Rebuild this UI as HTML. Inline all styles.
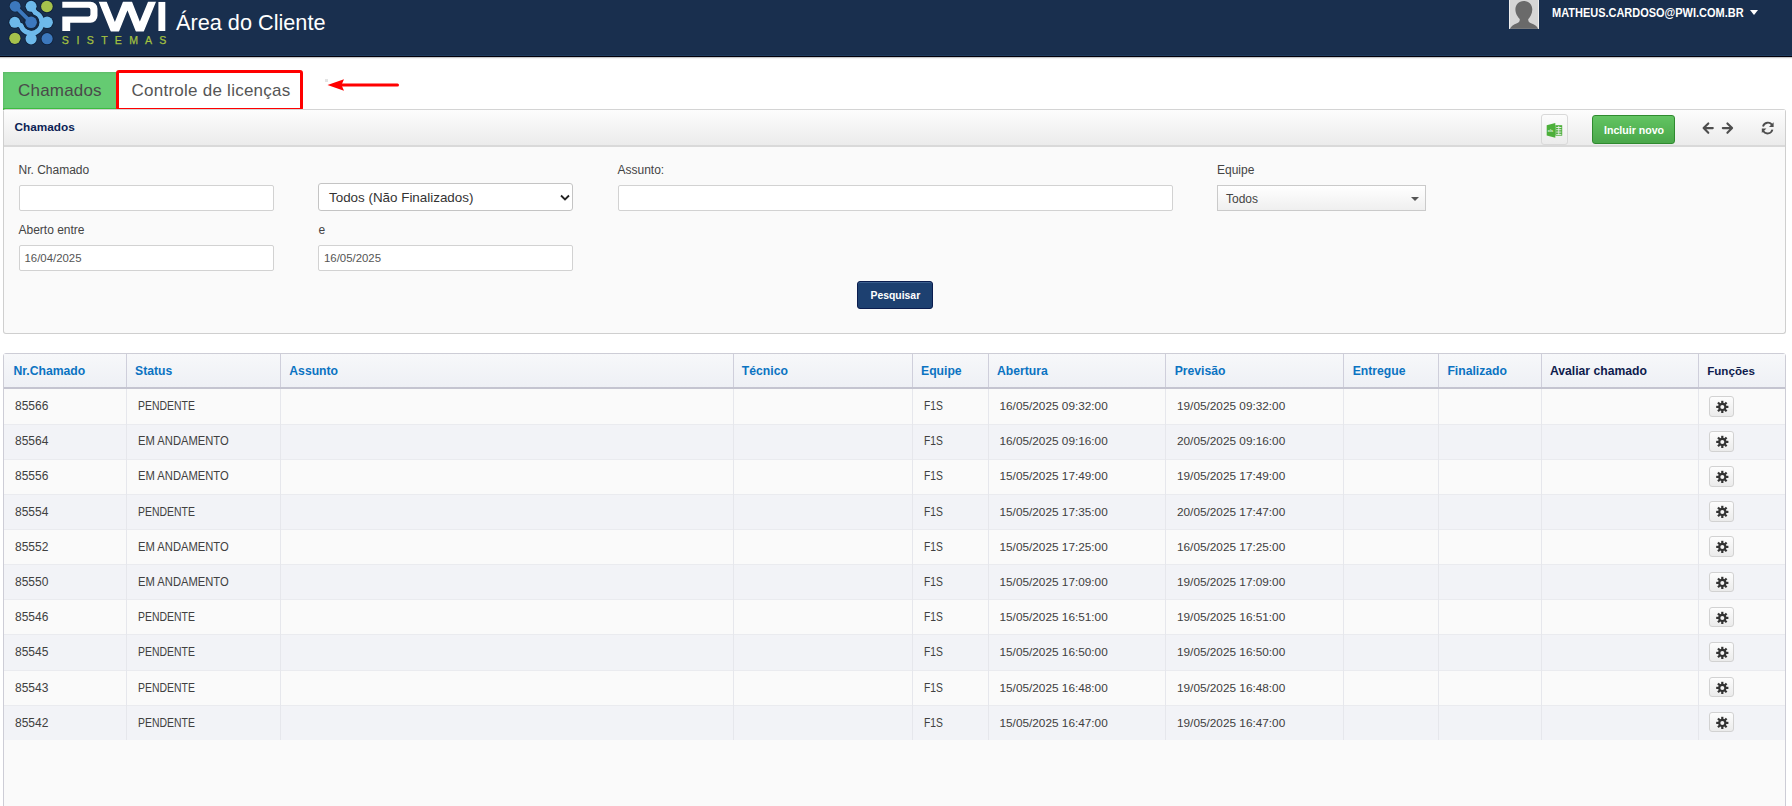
<!DOCTYPE html>
<html><head><meta charset="utf-8">
<style>
*{box-sizing:border-box;margin:0;padding:0}
html,body{width:1792px;height:806px;overflow:hidden;background:#fff;font-family:"Liberation Sans",sans-serif;position:relative}
.abs{position:absolute}
#hdr{left:0;top:0;width:1792px;height:55px;background:#192f4e}
#hl1{left:0;top:55px;width:1792px;height:1px;background:#1d3b5e}
#hl2{left:0;top:56px;width:1792px;height:1px;background:#00000c}
#hl3{left:0;top:57px;width:1792px;height:1px;background:#c8c8c8}
#hl4{left:0;top:58px;width:1792px;height:1px;background:#f4f4f4}
#logo{left:0;top:0}
#title{left:176px;top:8px;color:#fff;font-size:21.7px;line-height:30px;white-space:nowrap}
#avatar{left:1509px;top:0;width:30px;height:29px}
#email{left:1552px;top:5px;color:#fff;font-size:12.5px;font-weight:bold;line-height:16px;white-space:nowrap;transform:scaleX(.878);transform-origin:0 0}
#caret{left:1750px;top:10px;width:0;height:0;border-left:4.5px solid transparent;border-right:4.5px solid transparent;border-top:5px solid #fff}
#tabg{left:3px;top:71.5px;width:113px;height:38px;background:#65cb72;border-bottom:2px solid #3cbc3f;box-shadow:inset 1px 1px 2px rgba(0,0,0,.08)}
#tabg span{position:absolute;left:15px;top:9px;font-size:17px;letter-spacing:.2px;color:#4a4a4a;white-space:nowrap;line-height:20px}
#tabr{left:116px;top:70px;width:187px;height:41px;border:3px solid #ff0000;background:#fff;border-radius:3px}
#tabr span{position:absolute;left:12.5px;top:8px;font-size:17px;letter-spacing:.25px;color:#555;white-space:nowrap;line-height:20px}
#dot{left:325px;top:79px;width:3px;height:3px;background:#e4e4e4}
#panel{left:3px;top:109px;width:1783px;height:224.5px;border:1px solid #cfcfcf;border-top:1.5px solid #d4d4d4;background:#fafafa;border-radius:3px}
#phead{left:0;top:0;width:1781px;height:36.5px;background:linear-gradient(#fdfdfd,#ebebeb);border-bottom:2px solid #d9d9d9}
#phead .t{position:absolute;left:10.5px;top:10px;font-size:11.8px;font-weight:bold;color:#0c1f55;line-height:14px}
.lbl{font-size:12px;color:#444;white-space:nowrap;line-height:14px}
.inp{background:#fff;border:1px solid #d2d2d2;border-radius:2px;height:26px}
.inp span{position:absolute;left:5px;top:6px;font-size:11.4px;color:#555;line-height:13px}
#sel1{left:318px;top:183px;width:255px;height:28px;border:1px solid #c4c4c4;border-radius:3px;background:#fff}
#sel1 span{position:absolute;left:10px;top:6px;font-size:13.4px;color:#333;line-height:16px;white-space:nowrap}
#sel2{left:1217px;top:185px;width:209px;height:26px;border:1px solid #cacaca;background:linear-gradient(#fff,#efefef)}
#sel2 span{position:absolute;left:8px;top:6px;font-size:12px;color:#444;line-height:14px}
#sel2 i{position:absolute;left:193px;top:11px;width:0;height:0;border-left:4px solid transparent;border-right:4px solid transparent;border-top:4.5px solid #555}
#btnP{left:857px;top:281px;width:75.5px;height:28px;background:#1d4070;border:1px solid #0a1d4f;border-radius:3px;box-shadow:inset 0 1px 0 #3b5f8e}
#btnP span{position:absolute;left:12.5px;top:8px;font-size:10.4px;font-weight:bold;color:#fff;line-height:12px}
#xls{left:1541px;top:114px;width:27px;height:30.5px;border:1px solid #d9d9d9;border-radius:3px;background:linear-gradient(#fcfcfc,#ececec)}
#btnI{left:1591.5px;top:115px;width:83.5px;height:29px;background:linear-gradient(#62c462,#4aa74a);border:1px solid #2f8a2f;border-radius:3px}
#btnI span{position:absolute;left:11.5px;top:8px;font-size:10.6px;font-weight:bold;color:#fff;line-height:12px}
#tbl{left:3px;top:353px;width:1783px;height:470px;border:1px solid #cdcdd6;background:#fafafa;border-radius:3px}
#thead{left:4px;top:354px;width:1781px;height:35px;background:linear-gradient(#f7f8fa,#eef0f5);border-bottom:2px solid #c4c4d0}
.th{position:absolute;top:364px;font-size:12.2px;font-weight:bold;color:#0b73c2;line-height:14px;white-space:nowrap}
.th.dk{color:#0e1b4d}
.row{position:absolute;left:4px;width:1781px;height:35.07px}
.ro{background:#fafafa}
.re{background:#f2f3f7}
.td{position:absolute;font-size:12px;color:#404040;line-height:14px;white-space:nowrap}
.stp{transform:scaleX(.87);transform-origin:0 0}
.sta{transform:scaleX(.934);transform-origin:0 0}
.dt{font-size:11.8px}
.f1s{transform:scaleX(.86);transform-origin:0 0}
.rl{position:absolute;left:4px;width:1781px;height:1px;background:#eaebef}
.vsep{position:absolute;top:389px;width:1px;height:351px;background:#e6e7ec}
.hsep{position:absolute;top:354px;width:1px;height:33px;background:#cfcfdb}
.gear{position:absolute;width:25px;height:20.5px;border:1px solid #d2d2d2;border-radius:3px;background:linear-gradient(#fdfdfd,#ebebeb)}
.gear svg{position:absolute;left:-1px;top:-1px}
</style></head><body>
<svg width="0" height="0" style="position:absolute">
 <defs>
  <g id="gearI">
   <g transform="translate(13.3,10.9)" fill="#333">
    <circle r="4.2"/>
    <rect x="-1.1" y="-6.1" width="2.2" height="12.2"/>
    <rect x="-6.1" y="-1.1" width="12.2" height="2.2"/>
    <rect x="-1.1" y="-6.1" width="2.2" height="12.2" transform="rotate(45)"/>
    <rect x="-6.1" y="-1.1" width="12.2" height="2.2" transform="rotate(45)"/>
    <circle r="2" fill="#f4f4f4"/>
   </g>
  </g>
 </defs>
</svg>
<div id="hdr" class="abs"></div>
<div id="hl1" class="abs"></div><div id="hl2" class="abs"></div><div id="hl3" class="abs"></div><div id="hl4" class="abs"></div>
<svg id="logo" class="abs" width="175" height="50" viewBox="0 0 175 50">
 <g>
  <!-- light blue ring -->
  <g fill="none" stroke="#0f2039" stroke-linecap="round">
   <path d="M35.5,12.8 A10.6,10.6 0 1 1 21.2,25.9" stroke-width="6.6"/>
   <path d="M31.1,6.3 L35.5,12.8 M14.8,22.3 L21.2,25.9" stroke-width="6.4"/>
  </g>
  <circle cx="31.1" cy="6.3" r="6.3" fill="#0f2039"/>
  <circle cx="47.1" cy="22.3" r="6.5" fill="#0f2039"/>
  <circle cx="31.1" cy="38.8" r="6.3" fill="#0f2039"/>
  <circle cx="14.8" cy="22.3" r="6.3" fill="#0f2039"/>
  <g fill="none" stroke="#6db9ea" stroke-linecap="round">
   <path d="M35.5,12.8 A10.6,10.6 0 1 1 21.2,25.9" stroke-width="5"/>
   <path d="M31.1,6.3 L35.5,12.8 M14.8,22.3 L21.2,25.9" stroke-width="4.8"/>
  </g>
  <circle cx="31.1" cy="6.3" r="5.5" fill="#6db9ea"/>
  <circle cx="47.1" cy="22.3" r="5.8" fill="#6db9ea"/>
  <circle cx="31.1" cy="38.8" r="5.6" fill="#6db9ea"/>
  <circle cx="14.8" cy="22.3" r="5.5" fill="#6db9ea"/>
  <!-- dark blue diagonal -->
  <circle cx="31.1" cy="22.3" r="8.1" fill="#142840"/>
  <path d="M15.1,6.3 L31.1,22.3" stroke="#142840" stroke-width="6" stroke-linecap="round"/>
  <circle cx="15.1" cy="6.3" r="6.2" fill="#142840"/>
  <path d="M15.1,6.3 L31.1,22.3" stroke="#3c78bd" stroke-width="3.8" stroke-linecap="round"/>
  <circle cx="15.1" cy="6.3" r="5.4" fill="#3c78bd"/>
  <circle cx="31.1" cy="22.3" r="5.8" fill="#3c78bd"/>
  <!-- corners -->
  <circle cx="46.9" cy="6.5" r="6.6" fill="#0f2039"/>
  <circle cx="46.9" cy="6.5" r="5.8" fill="#a6c24c"/>
  <circle cx="14.9" cy="38.3" r="6.4" fill="#0f2039"/>
  <circle cx="14.9" cy="38.3" r="5.6" fill="#a6c24c"/>
  <circle cx="47.1" cy="38.7" r="6.4" fill="#0f2039"/>
  <circle cx="47.1" cy="38.7" r="5.6" fill="#3c78bd"/>
 </g>
 <!-- PWI -->
 <defs><clipPath id="wclip"><rect x="90" y="1.7" width="70" height="29.9"/></clipPath></defs>
 <path d="M62.3,1.7 H90.5 A7,7 0 0 1 97.5,8.7 V15.8 A7,7 0 0 1 90.5,22.8 H70.2 V31 H62.3 V16.5 H88.4 A2,2 0 0 0 90.4,14.5 V9.8 A2,2 0 0 0 88.4,7.8 H62.3 Z" fill="#fff"/>
 <path clip-path="url(#wclip)" d="M100.66,-3.3 L114.9,31.8 L127.5,0.35 L139.8,31.5 L154.1,-3.3" fill="none" stroke="#fff" stroke-width="7.4" stroke-linejoin="miter" stroke-miterlimit="20"/>
 <rect x="158.4" y="1.95" width="6.9" height="29.05" fill="#fff"/>
 <g fill="#a3c040" font-family="Liberation Sans" font-size="10.6" text-anchor="middle" stroke="#a3c040" stroke-width="0.25">
  <text x="65.3" y="43.8">S</text>
  <text x="77.9" y="43.8">I</text>
  <text x="90.3" y="43.8">S</text>
  <text x="104.45" y="43.8">T</text>
  <text x="118.3" y="43.8">E</text>
  <text x="133.7" y="43.8">M</text>
  <text x="148.65" y="43.8">A</text>
  <text x="162.8" y="43.8">S</text>
 </g>
</svg>
<div id="title" class="abs">Área do Cliente</div>
<svg id="avatar" class="abs" viewBox="0 0 30 29">
 <rect width="30" height="28.7" fill="#d6d6d6"/>
 <rect x="0" y="0" width="0.8" height="29" fill="#f4f4f4"/>
 <rect x="29.2" y="0" width="0.8" height="29" fill="#f4f4f4"/>
 <path d="M14.8,0.9 C20,0.9 23.3,4.5 23.3,9.5 C23.3,14 21,17 19.2,19.2 C19.2,21.2 19.8,22.3 22,23.2 C25.5,24.5 28.2,26 29,28.7 H1 C2,26 4.6,24.5 8,23.2 C10.2,22.3 10.8,21.2 10.8,19.2 C9,17 6.4,14 6.4,9.5 C6.4,4.5 9.6,0.9 14.8,0.9 Z" fill="#6a6a6a"/>
</svg>
<div id="email" class="abs">MATHEUS.CARDOSO@PWI.COM.BR</div>
<div id="caret" class="abs"></div>

<div id="tabg" class="abs"><span>Chamados</span></div>
<div id="tabr" class="abs"><span>Controle de licenças</span></div>
<div id="dot" class="abs"></div>
<svg class="abs" style="left:320px;top:74px" width="85" height="22" viewBox="320 74 85 22">
 <path d="M341,85 H397.5" stroke="#ff0000" stroke-width="3" stroke-linecap="round"/>
 <path d="M327.5,85 L344,79.3 L341.5,85 L344,90.7 Z" fill="#ff0000"/>
</svg>

<div id="panel" class="abs">
 <div id="phead" class="abs"><span class="t">Chamados</span></div>
</div>
<div id="xls" class="abs">
 <svg width="27" height="31" viewBox="1541 114 27 31" style="position:absolute;left:-1px;top:-1px">
  <path d="M1546.7,125.3 L1555.3,123 V137.7 L1546.7,135.4 Z" fill="#4caf3a"/>
  <rect x="1555.3" y="125.2" width="6.9" height="10.5" fill="#4caf3a"/>
  <g fill="#f0f0f0">
   <rect x="1556.2" y="127" width="5.2" height="0.9"/>
   <rect x="1556.2" y="129.3" width="5.2" height="0.9"/>
   <rect x="1556.2" y="131.6" width="5.2" height="0.9"/>
   <rect x="1556.2" y="133.9" width="5.2" height="0.9"/>
   <rect x="1558.4" y="126" width="0.8" height="9"/>
  </g>
  <text x="1547.8" y="132.2" font-family="Liberation Sans" font-size="3.8" fill="#e9f5e5" font-weight="bold">xls</text>
 </svg>
</div>
<div id="btnI" class="abs"><span>Incluir novo</span></div>
<svg class="abs" style="left:1695px;top:112px" width="90" height="33" viewBox="1695 112 90 33">
 <g fill="none" stroke="#4e4e4e" stroke-width="2.1" stroke-linecap="round" stroke-linejoin="round">
  <path d="M1708.3,123.4 L1703.6,128.1 L1708.3,132.8 M1703.8,128.1 H1712.8"/>
  <path d="M1727.4,123.4 L1732.1,128.1 L1727.4,132.8 M1731.9,128.1 H1722.8"/>
 </g>
 <g fill="none" stroke="#4e4e4e" stroke-width="1.9">
  <path d="M1763,126.5 A5,5 0 0 1 1772.2,125.2"/>
  <path d="M1772.4,129.6 A5,5 0 0 1 1763.2,130.9"/>
 </g>
 <path d="M1773.6,122.3 V127 H1769 Z" fill="#4e4e4e"/>
 <path d="M1761.8,133.1 V128.4 H1766.4 Z" fill="#4e4e4e"/>
</svg>

<div class="abs lbl" style="left:18.5px;top:163px">Nr. Chamado</div>
<div class="abs inp" style="left:18.5px;top:185px;width:255px"></div>
<div id="sel1" class="abs"><span>Todos (Não Finalizados)</span>
 <svg width="12" height="10" style="position:absolute;left:240px;top:9px" viewBox="0 0 12 10"><path d="M2,2.5 L6,6.5 L10,2.5" fill="none" stroke="#222" stroke-width="1.8"/></svg>
</div>
<div class="abs lbl" style="left:617.5px;top:163px">Assunto:</div>
<div class="abs inp" style="left:617.5px;top:184.5px;width:555px"></div>
<div class="abs lbl" style="left:1217px;top:163px">Equipe</div>
<div id="sel2" class="abs"><span>Todos</span><i></i></div>
<div class="abs lbl" style="left:18.5px;top:223px">Aberto entre</div>
<div class="abs inp" style="left:18.5px;top:244.5px;width:255px"><span>16/04/2025</span></div>
<div class="abs lbl" style="left:318.5px;top:223px">e</div>
<div class="abs inp" style="left:318px;top:244.5px;width:255px"><span>16/05/2025</span></div>
<div id="btnP" class="abs"><span>Pesquisar</span></div>

<div id="tbl" class="abs"></div>
<div id="thead" class="abs"></div>
<div class="th" style="left:13.4px">Nr.Chamado</div>
<div class="th" style="left:135px">Status</div>
<div class="th" style="left:289.3px">Assunto</div>
<div class="th" style="left:741.8px">Técnico</div>
<div class="th" style="left:921px">Equipe</div>
<div class="th" style="left:997px">Abertura</div>
<div class="th" style="left:1174.7px">Previsão</div>
<div class="th" style="left:1352.7px">Entregue</div>
<div class="th" style="left:1447.4px">Finalizado</div>
<div class="th dk" style="left:1549.9px">Avaliar chamado</div>
<div class="th dk" style="left:1707.2px;font-size:11.6px">Funções</div>
<div class="row ro" style="top:389.00px"></div>
<div class="row re" style="top:424.07px"></div>
<div class="rl" style="top:424.07px"></div>
<div class="row ro" style="top:459.14px"></div>
<div class="rl" style="top:459.14px"></div>
<div class="row re" style="top:494.21px"></div>
<div class="rl" style="top:494.21px"></div>
<div class="row ro" style="top:529.28px"></div>
<div class="rl" style="top:529.28px"></div>
<div class="row re" style="top:564.35px"></div>
<div class="rl" style="top:564.35px"></div>
<div class="row ro" style="top:599.42px"></div>
<div class="rl" style="top:599.42px"></div>
<div class="row re" style="top:634.49px"></div>
<div class="rl" style="top:634.49px"></div>
<div class="row ro" style="top:669.56px"></div>
<div class="rl" style="top:669.56px"></div>
<div class="row re" style="top:704.63px"></div>
<div class="rl" style="top:704.63px"></div>
<div class="td" style="left:15px;top:399.00px">85566</div>
<div class="td stp" style="left:138px;top:399.00px">PENDENTE</div>
<div class="td f1s" style="left:923.5px;top:399.00px">F1S</div>
<div class="td dt" style="left:999.5px;top:399.00px">16/05/2025 09:32:00</div>
<div class="td dt" style="left:1177px;top:399.00px">19/05/2025 09:32:00</div>
<div class="gear" style="left:1709px;top:396.20px"><svg width="25" height="20" viewBox="0 0 25 20"><use href="#gearI"/></svg></div>
<div class="td" style="left:15px;top:434.19px">85564</div>
<div class="td sta" style="left:138px;top:434.19px">EM ANDAMENTO</div>
<div class="td f1s" style="left:923.5px;top:434.19px">F1S</div>
<div class="td dt" style="left:999.5px;top:434.19px">16/05/2025 09:16:00</div>
<div class="td dt" style="left:1177px;top:434.19px">20/05/2025 09:16:00</div>
<div class="gear" style="left:1709px;top:431.27px"><svg width="25" height="20" viewBox="0 0 25 20"><use href="#gearI"/></svg></div>
<div class="td" style="left:15px;top:469.38px">85556</div>
<div class="td sta" style="left:138px;top:469.38px">EM ANDAMENTO</div>
<div class="td f1s" style="left:923.5px;top:469.38px">F1S</div>
<div class="td dt" style="left:999.5px;top:469.38px">15/05/2025 17:49:00</div>
<div class="td dt" style="left:1177px;top:469.38px">19/05/2025 17:49:00</div>
<div class="gear" style="left:1709px;top:466.34px"><svg width="25" height="20" viewBox="0 0 25 20"><use href="#gearI"/></svg></div>
<div class="td" style="left:15px;top:504.57px">85554</div>
<div class="td stp" style="left:138px;top:504.57px">PENDENTE</div>
<div class="td f1s" style="left:923.5px;top:504.57px">F1S</div>
<div class="td dt" style="left:999.5px;top:504.57px">15/05/2025 17:35:00</div>
<div class="td dt" style="left:1177px;top:504.57px">20/05/2025 17:47:00</div>
<div class="gear" style="left:1709px;top:501.41px"><svg width="25" height="20" viewBox="0 0 25 20"><use href="#gearI"/></svg></div>
<div class="td" style="left:15px;top:539.76px">85552</div>
<div class="td sta" style="left:138px;top:539.76px">EM ANDAMENTO</div>
<div class="td f1s" style="left:923.5px;top:539.76px">F1S</div>
<div class="td dt" style="left:999.5px;top:539.76px">15/05/2025 17:25:00</div>
<div class="td dt" style="left:1177px;top:539.76px">16/05/2025 17:25:00</div>
<div class="gear" style="left:1709px;top:536.48px"><svg width="25" height="20" viewBox="0 0 25 20"><use href="#gearI"/></svg></div>
<div class="td" style="left:15px;top:574.95px">85550</div>
<div class="td sta" style="left:138px;top:574.95px">EM ANDAMENTO</div>
<div class="td f1s" style="left:923.5px;top:574.95px">F1S</div>
<div class="td dt" style="left:999.5px;top:574.95px">15/05/2025 17:09:00</div>
<div class="td dt" style="left:1177px;top:574.95px">19/05/2025 17:09:00</div>
<div class="gear" style="left:1709px;top:571.55px"><svg width="25" height="20" viewBox="0 0 25 20"><use href="#gearI"/></svg></div>
<div class="td" style="left:15px;top:610.14px">85546</div>
<div class="td stp" style="left:138px;top:610.14px">PENDENTE</div>
<div class="td f1s" style="left:923.5px;top:610.14px">F1S</div>
<div class="td dt" style="left:999.5px;top:610.14px">15/05/2025 16:51:00</div>
<div class="td dt" style="left:1177px;top:610.14px">19/05/2025 16:51:00</div>
<div class="gear" style="left:1709px;top:606.62px"><svg width="25" height="20" viewBox="0 0 25 20"><use href="#gearI"/></svg></div>
<div class="td" style="left:15px;top:645.33px">85545</div>
<div class="td stp" style="left:138px;top:645.33px">PENDENTE</div>
<div class="td f1s" style="left:923.5px;top:645.33px">F1S</div>
<div class="td dt" style="left:999.5px;top:645.33px">15/05/2025 16:50:00</div>
<div class="td dt" style="left:1177px;top:645.33px">19/05/2025 16:50:00</div>
<div class="gear" style="left:1709px;top:641.69px"><svg width="25" height="20" viewBox="0 0 25 20"><use href="#gearI"/></svg></div>
<div class="td" style="left:15px;top:680.52px">85543</div>
<div class="td stp" style="left:138px;top:680.52px">PENDENTE</div>
<div class="td f1s" style="left:923.5px;top:680.52px">F1S</div>
<div class="td dt" style="left:999.5px;top:680.52px">15/05/2025 16:48:00</div>
<div class="td dt" style="left:1177px;top:680.52px">19/05/2025 16:48:00</div>
<div class="gear" style="left:1709px;top:676.76px"><svg width="25" height="20" viewBox="0 0 25 20"><use href="#gearI"/></svg></div>
<div class="td" style="left:15px;top:715.71px">85542</div>
<div class="td stp" style="left:138px;top:715.71px">PENDENTE</div>
<div class="td f1s" style="left:923.5px;top:715.71px">F1S</div>
<div class="td dt" style="left:999.5px;top:715.71px">15/05/2025 16:47:00</div>
<div class="td dt" style="left:1177px;top:715.71px">19/05/2025 16:47:00</div>
<div class="gear" style="left:1709px;top:711.83px"><svg width="25" height="20" viewBox="0 0 25 20"><use href="#gearI"/></svg></div>
<div class="vsep" style="left:126px"></div>
<div class="hsep" style="left:126px"></div>
<div class="vsep" style="left:280px"></div>
<div class="hsep" style="left:280px"></div>
<div class="vsep" style="left:733px"></div>
<div class="hsep" style="left:733px"></div>
<div class="vsep" style="left:912px"></div>
<div class="hsep" style="left:912px"></div>
<div class="vsep" style="left:988px"></div>
<div class="hsep" style="left:988px"></div>
<div class="vsep" style="left:1165px"></div>
<div class="hsep" style="left:1165px"></div>
<div class="vsep" style="left:1343px"></div>
<div class="hsep" style="left:1343px"></div>
<div class="vsep" style="left:1438px"></div>
<div class="hsep" style="left:1438px"></div>
<div class="vsep" style="left:1541px"></div>
<div class="hsep" style="left:1541px"></div>
<div class="vsep" style="left:1698px"></div>
<div class="hsep" style="left:1698px"></div>
</body></html>
